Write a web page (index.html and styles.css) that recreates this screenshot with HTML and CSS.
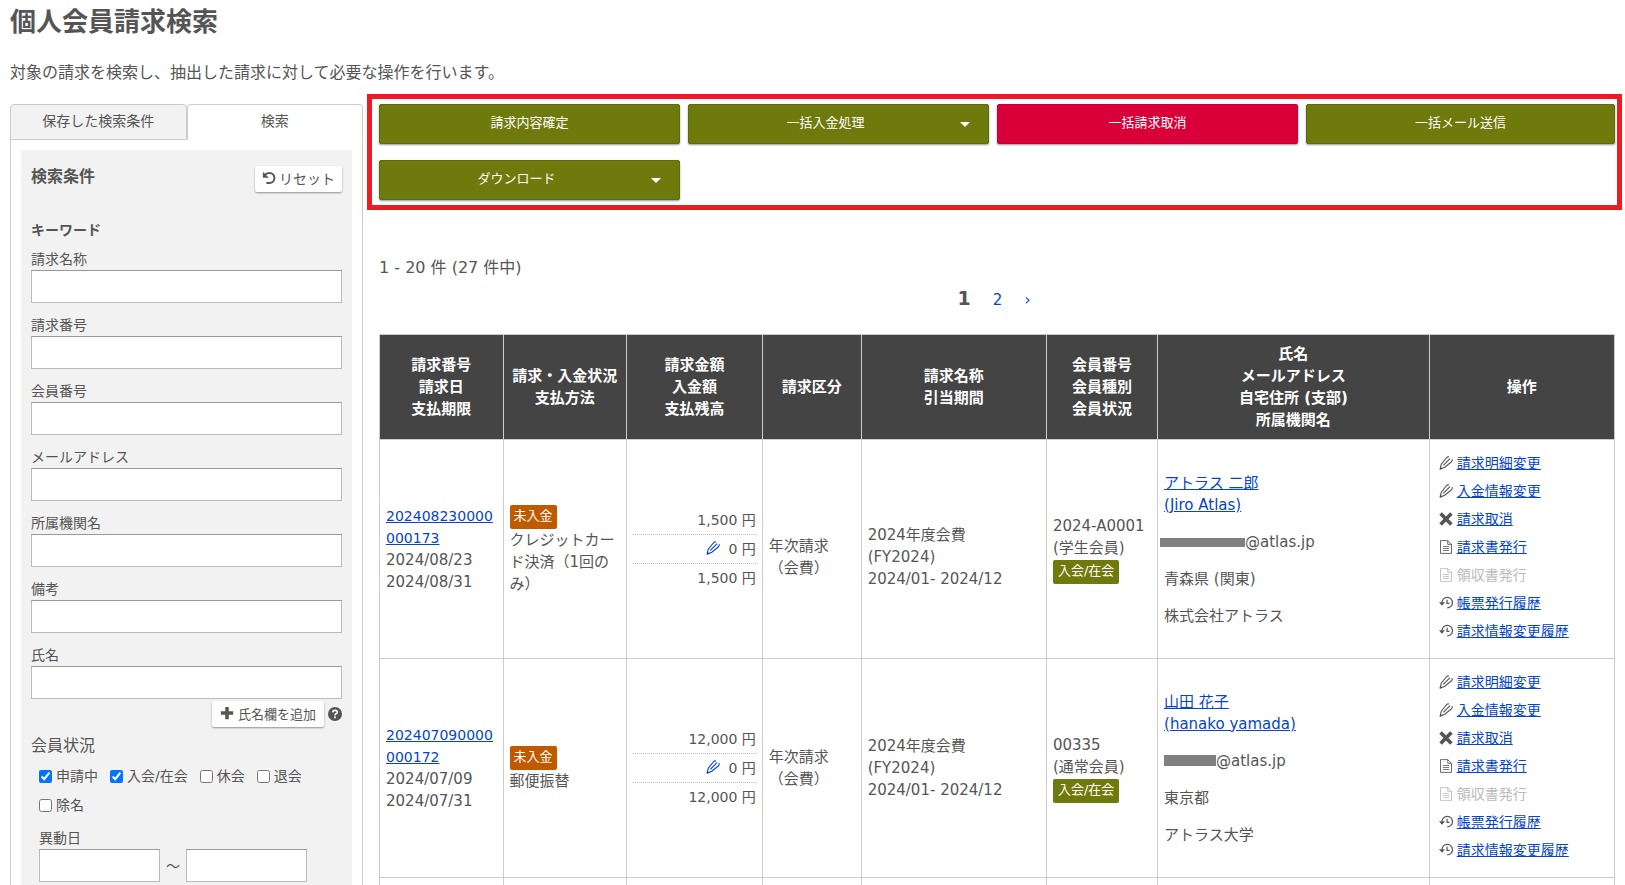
FILE: index.html
```
<!DOCTYPE html>
<html lang="ja">

<head>
    <meta charset="UTF-8">
    <meta name="viewport" content="width=device-width, initial-scale=1.0">
    <title>個人会員請求検索</title>
    <link rel="stylesheet" href="styles.css">
</head>

<body>
    <svg class="sprite" aria-hidden="true">
        <symbol id="pencil" viewBox="0 0 16 16">
            <path d="M1.2 15.2 L2.6 9.4 L8.6 2 Q9.8 .6 11.4 1.2 M1.2 15.2 L6.6 12.8 L14 6.8 Q15.6 5.4 14.8 3.8 M5 10.8 L12.6 3" fill="none" stroke="currentColor" stroke-width="1.3" />
            <path d="M1.8 12.4 L3.8 14.2 L.8 15.6 Z" fill="currentColor" />
        </symbol>
        <symbol id="cross" viewBox="0 0 16 16">
            <path d="M1.8 1.8 L14.2 14.2 M14.2 1.8 L1.8 14.2" fill="none" stroke="currentColor" stroke-width="4.2" />
        </symbol>
        <symbol id="file" viewBox="0 0 16 16">
            <path d="M1.7 .7 H10 L14.3 5 V15.3 H1.7 Z M10 .7 V5 H14.3" fill="none" stroke="currentColor" stroke-width="1" />
            <path d="M4.5 7.4 H11.5 M4.5 9.7 H11.5 M4.5 12 H11.5" stroke="currentColor" stroke-width=".9" />
        </symbol>
        <symbol id="history" viewBox="0 0 16 16">
            <path d="M3.4 7.6 A6 6 0 1 1 9.4 13.6 M9.2 4.2 V8.4 H12" fill="none" stroke="currentColor" stroke-width="1.4" />
            <path d="M0 7 H6.8 L3.4 11 Z" fill="currentColor" />
        </symbol>
        <symbol id="undo" viewBox="0 0 16 16">
            <path d="M3.6 4.2 Q6 2.4 8.6 2.4 A5.6 5.6 0 0 1 8.6 13.6 H5" fill="none" stroke="currentColor" stroke-width="2.3" />
            <path d="M1 .8 V7.6 H7.8 Z" fill="currentColor" />
        </symbol>
        <symbol id="plus" viewBox="0 0 16 16">
            <path d="M8 1 V15 M1 8 H15" fill="none" stroke="currentColor" stroke-width="4" />
        </symbol>
        <symbol id="help" viewBox="0 0 16 16">
            <circle cx="8" cy="8" r="8" fill="currentColor" />
            <path d="M5.4 6.2 Q5.6 3.8 8 3.8 Q10.6 3.8 10.6 6 Q10.6 7.2 9.2 7.8 Q8 8.4 8 9.6" fill="none" stroke="#fff" stroke-width="1.9" />
            <rect x="7" y="10.8" width="2" height="2" fill="#fff" />
        </symbol>
    </svg>

    <h1>個人会員請求検索</h1>
    <p class="lead">対象の請求を検索し、抽出した請求に対して必要な操作を行います。</p>

    <div class="layout">
        <aside class="side">
            <div class="tabs">
                <button type="button" class="tab">保存した検索条件</button>
                <button type="button" class="tab active">検索</button>
            </div>
            <div class="panel">
                <form class="search">
                    <div class="search-head">
                        <h2>検索条件</h2>
                        <button type="reset" class="btn-small"><svg class="icon"><use href="#undo" /></svg>リセット</button>
                    </div>

                    <h3>キーワード</h3>
                    <div class="field">
                        <label for="billName">請求名称</label>
                        <input type="text" id="billName">
                    </div>
                    <div class="field">
                        <label for="billNo">請求番号</label>
                        <input type="text" id="billNo">
                    </div>
                    <div class="field">
                        <label for="memberNo">会員番号</label>
                        <input type="text" id="memberNo">
                    </div>
                    <div class="field">
                        <label for="mail">メールアドレス</label>
                        <input type="text" id="mail">
                    </div>
                    <div class="field">
                        <label for="org">所属機関名</label>
                        <input type="text" id="org">
                    </div>
                    <div class="field">
                        <label for="note">備考</label>
                        <input type="text" id="note">
                    </div>
                    <div class="field">
                        <label for="name">氏名</label>
                        <input type="text" id="name">
                    </div>
                    <div class="add-name">
                        <button type="button" class="btn-small"><svg class="icon"><use href="#plus" /></svg>氏名欄を追加</button>
                        <svg class="icon"><use href="#help" /></svg>
                    </div>

                    <h4>会員状況</h4>
                    <div class="checks">
                        <label><input type="checkbox" checked>申請中</label>
                        <label><input type="checkbox" checked>入会/在会</label>
                        <label><input type="checkbox">休会</label>
                        <label><input type="checkbox">退会</label>
                        <label><input type="checkbox">除名</label>
                    </div>

                    <div class="dates">
                        <label for="dateFrom" id="dateLabel">異動日</label>
                        <div class="range">
                            <input type="text" id="dateFrom">
                            <span>～</span>
                            <input type="text" id="dateTo" aria-labelledby="dateLabel">
                        </div>
                    </div>
                </form>
            </div>
        </aside>

        <main class="main">
            <div class="actions">
                <button type="button" class="btn">請求内容確定</button>
                <button type="button" class="btn menu">一括入金処理</button>
                <button type="button" class="btn danger">一括請求取消</button>
                <button type="button" class="btn">一括メール送信</button>
                <button type="button" class="btn menu">ダウンロード</button>
            </div>

            <div class="results">
                <p class="count">1 - 20 件 (27 件中)</p>
                <nav class="pager">
                    <strong>1</strong>
                    <a href="#">2</a>
                    <a href="#">›</a>
                </nav>

                <table>
                    <colgroup>
                        <col class="w10">
                        <col class="w10">
                        <col class="w11">
                        <col class="w8">
                        <col class="w15">
                        <col class="w9">
                        <col class="w22">
                        <col class="w15">
                    </colgroup>
                    <thead>
                        <tr>
                            <th>請求番号<br>請求日<br>支払期限</th>
                            <th>請求・入金状況<br>支払方法</th>
                            <th>請求金額<br>入金額<br>支払残高</th>
                            <th>請求区分</th>
                            <th>請求名称<br>引当期間</th>
                            <th>会員番号<br>会員種別<br>会員状況</th>
                            <th>氏名<br>メールアドレス<br>自宅住所 (支部)<br>所属機関名</th>
                            <th>操作</th>
                        </tr>
                    </thead>
                    <tbody>
                        <tr>
                            <td><a href="#" class="bill-no">202408230000<br>000173</a><br>2024/08/23<br>2024/08/31</td>
                            <td><span class="badge unpaid">未入金</span><br>クレジットカード決済（1回のみ）</td>
                            <td>
                                <ul class="amounts">
                                    <li>1,500 円</li>
                                    <li><a href="#" aria-label="編集"><svg class="icon"><use href="#pencil" /></svg></a>0 円</li>
                                    <li>1,500 円</li>
                                </ul>
                            </td>
                            <td class="low">年次請求<br>（会費）</td>
                            <td class="low">2024年度会費<br>(FY2024)<br>2024/01- 2024/12</td>
                            <td>2024-A0001<br>(学生会員)<br><span class="badge">入会/在会</span></td>
                            <td>
                                <p><a href="#">アトラス 二郎<br>(Jiro Atlas)</a></p>
                                <p><span class="mask long"></span>@atlas.jp</p>
                                <p>青森県 (関東)</p>
                                <p>株式会社アトラス</p>
                            </td>
                            <td>
                                <ul class="ops">
                                    <li><svg class="icon"><use href="#pencil" /></svg><a href="#">請求明細変更</a></li>
                                    <li><svg class="icon"><use href="#pencil" /></svg><a href="#">入金情報変更</a></li>
                                    <li><svg class="icon"><use href="#cross" /></svg><a href="#">請求取消</a></li>
                                    <li><svg class="icon"><use href="#file" /></svg><a href="#">請求書発行</a></li>
                                    <li class="disabled"><svg class="icon"><use href="#file" /></svg>領収書発行</li>
                                    <li><svg class="icon"><use href="#history" /></svg><a href="#">帳票発行履歴</a></li>
                                    <li><svg class="icon"><use href="#history" /></svg><a href="#">請求情報変更履歴</a></li>
                                </ul>
                            </td>
                        </tr>
                        <tr>
                            <td><a href="#" class="bill-no">202407090000<br>000172</a><br>2024/07/09<br>2024/07/31</td>
                            <td><span class="badge unpaid">未入金</span><br>郵便振替</td>
                            <td>
                                <ul class="amounts">
                                    <li>12,000 円</li>
                                    <li><a href="#" aria-label="編集"><svg class="icon"><use href="#pencil" /></svg></a>0 円</li>
                                    <li>12,000 円</li>
                                </ul>
                            </td>
                            <td>年次請求<br>（会費）</td>
                            <td>2024年度会費<br>(FY2024)<br>2024/01- 2024/12</td>
                            <td>00335<br>(通常会員)<br><span class="badge">入会/在会</span></td>
                            <td>
                                <p><a href="#">山田 花子<br>(hanako yamada)</a></p>
                                <p><span class="mask"></span>@atlas.jp</p>
                                <p>東京都</p>
                                <p>アトラス大学</p>
                            </td>
                            <td>
                                <ul class="ops">
                                    <li><svg class="icon"><use href="#pencil" /></svg><a href="#">請求明細変更</a></li>
                                    <li><svg class="icon"><use href="#pencil" /></svg><a href="#">入金情報変更</a></li>
                                    <li><svg class="icon"><use href="#cross" /></svg><a href="#">請求取消</a></li>
                                    <li><svg class="icon"><use href="#file" /></svg><a href="#">請求書発行</a></li>
                                    <li class="disabled"><svg class="icon"><use href="#file" /></svg>領収書発行</li>
                                    <li><svg class="icon"><use href="#history" /></svg><a href="#">帳票発行履歴</a></li>
                                    <li><svg class="icon"><use href="#history" /></svg><a href="#">請求情報変更履歴</a></li>
                                </ul>
                            </td>
                        </tr>
                        <tr>
                            <td></td>
                            <td></td>
                            <td></td>
                            <td></td>
                            <td></td>
                            <td></td>
                            <td></td>
                            <td></td>
                        </tr>
                    </tbody>
                </table>
            </div>
        </main>
    </div>
</body>

</html>
```

FILE: styles.css
```
* {
    box-sizing: border-box;
}

body {
    margin: 0;
    padding: 0 3px 0 10px;
    background: #fff;
    color: #555;
    font-family: "DejaVu Sans", "Noto Sans CJK JP", sans-serif;
    font-size: 16px;
    line-height: 22px;
}

h1,
h2,
h3,
h4,
p,
ul {
    margin: 0;
    padding: 0;
}

ul {
    list-style: none;
}

a {
    color: #0645c8;
}

input,
button {
    font-family: inherit;
    color: inherit;
}

.sprite {
    display: none;
}

.icon {
    width: 14px;
    height: 14px;
    flex: none;
}

h1 {
    padding-top: 4px;
    font-size: 26px;
    line-height: 36px;
}

.lead {
    padding: 22px 0 10px;
}

.layout {
    display: flex;
    gap: 4px;
}

/* 検索パネル */
.side {
    width: 353px;
    flex: none;
    padding-top: 10px;
}

.tabs {
    display: flex;
}

.tab {
    flex: 1;
    height: 36px;
    padding: 0 0 4px;
    border: 1px solid #ccc;
    border-radius: 4px 4px 0 0;
    background: #f2f2f2;
    font-size: 14px;
}

.tab.active {
    border-bottom-color: #fff;
    background: #fff;
}

.panel {
    padding: 10px;
    border: 1px solid #ccc;
    border-top: none;
}

.search {
    padding: 10px 10px 40px;
    background: #f2f2f2;
}

.search-head {
    display: flex;
    justify-content: space-between;
    padding-top: 6px;
    margin-bottom: 27px;
}

h2 {
    font-size: 16px;
}

.btn-small {
    display: flex;
    align-items: center;
    gap: 3px;
    height: 26px;
    padding: 0 7px 2px;
    border: none;
    border-radius: 2px;
    background: #fff;
    box-shadow: 0 1px 2px rgba(0, 0, 0, 0.4);
    font-size: 14px;
    white-space: nowrap;
}

h3 {
    font-size: 14px;
    margin-bottom: 7px;
}

.field {
    margin-bottom: 11px;
    font-size: 14px;
}

label {
    display: block;
}

input[type="text"] {
    display: block;
    width: 100%;
    height: 33px;
    padding: 4px 6px;
    border: 1px solid #bbb;
    border-top-color: #999;
    background: #fff;
}

.add-name {
    display: flex;
    justify-content: flex-end;
    align-items: center;
    gap: 4px;
    margin-top: -9px;
}

.add-name .btn-small {
    padding: 0 8px 2px;
    gap: 4px;
    font-size: 13px;
}

h4 {
    padding: 8px 0;
    font-size: 16px;
    font-weight: normal;
}

.checks {
    display: flex;
    flex-wrap: wrap;
    gap: 7px 12px;
    padding-left: 8px;
    font-size: 14px;
}

.checks label {
    display: flex;
    align-items: center;
    gap: 4px;
}

.checks input {
    width: 13px;
    height: 13px;
    margin: 0;
}

.dates {
    padding: 11px 0 0 8px;
    font-size: 14px;
}

.range {
    display: flex;
    align-items: center;
    gap: 6px;
}

.range input[type="text"] {
    width: 121px;
}

/* 一括操作 */
.main {
    flex: 1;
    min-width: 0;
}

.actions {
    display: grid;
    grid-template-columns: repeat(4, 1fr);
    row-gap: 16px;
    padding: 5px 2px 5px 7px;
    border: 5px solid #ed1c24;
}

.btn {
    display: flex;
    align-items: center;
    justify-content: center;
    height: 40px;
    margin-right: 8px;
    padding: 0 0 6px;
    border: 1px solid #5f6a0b;
    border-radius: 2px;
    background: #6e7a0c;
    box-shadow: 0 1px 2px rgba(0, 0, 0, 0.4);
    color: #fff;
    font-size: 13px;
}

.btn:nth-child(4n) {
    margin-right: 0;
}

.btn.danger {
    border-color: #c90036;
    background: #d9003a;
}

.btn.menu {
    position: relative;
    padding-right: 26px;
}

.btn.menu::after {
    content: "";
    position: absolute;
    top: 17px;
    right: 18px;
    border: 5px solid transparent;
    border-top-color: #fff;
    border-bottom: none;
}

/* 検索結果 */
.results {
    padding: 47px 7px 0 12px;
}

.pager {
    display: flex;
    justify-content: center;
    align-items: baseline;
    gap: 22px;
    padding: 8px 6px 23px 0;
    font-size: 15px;
}

.pager strong {
    font-size: 19px;
}

.pager a {
    text-decoration: none;
}

table {
    width: 100%;
    table-layout: fixed;
    border-collapse: collapse;
    font-size: 15px;
}

.w8 {
    width: 8%;
}

.w9 {
    width: 9%;
}

.w10 {
    width: 10%;
}

.w11 {
    width: 11%;
}

.w15 {
    width: 15%;
}

.w22 {
    width: 22%;
}

th,
td {
    padding: 8px 6px;
    border: 1px solid #ccc;
}

th {
    background: #444;
    color: #fff;
}

td {
    height: 219px;
    text-align: left;
}

td.low {
    padding-top: 24px;
}

.bill-no {
    font-size: 14px;
}

td p + p {
    margin-top: 15px;
}

.badge {
    display: inline-block;
    padding: 0 5px 2px;
    border-radius: 2px;
    background: #6e7a0c;
    color: #fff;
    font-size: 13px;
}

.badge.unpaid {
    padding: 0 4px 2px;
    background: #c05a00;
}

.amounts {
    font-size: 14px;
    text-align: right;
}

.amounts li {
    padding: 3px 0;
}

.amounts li + li {
    border-top: 1px dotted #bbb;
}

.amounts .icon {
    margin-right: 8px;
    vertical-align: -1px;
}

/* メールアドレスの伏せ字 */
.mask {
    display: inline-block;
    width: 52px;
    height: 11px;
    background: #808080;
}

.mask.long {
    width: 85px;
    height: 9px;
    margin-left: -4px;
}

.ops {
    padding: 0 0 4px 3px;
    font-size: 14px;
}

.ops li {
    display: flex;
    align-items: center;
    gap: 4px;
    height: 28px;
}

.ops .disabled {
    color: #bbb;
}
```
